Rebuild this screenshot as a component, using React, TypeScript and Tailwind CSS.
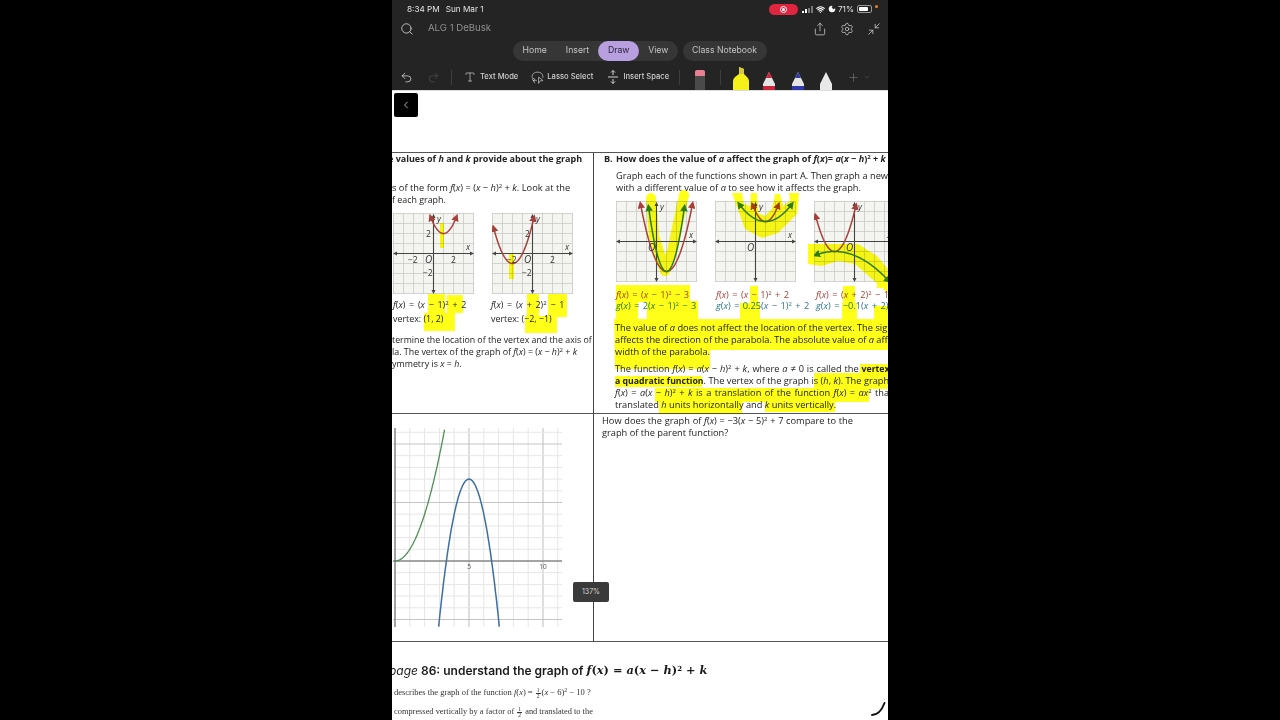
import { ChevronDown, ChevronLeft, Plus, Redo2, Search, Settings, Share, Type, Undo2, Minimize2, Moon, Wifi, LassoSelect } from 'lucide-react';

type Curve = { a: number; h: number; k: number; color: string };

const RED = '#a8403a';
const GREEN = '#2e7d3c';

// samples y = a(x-h)^2 + k, skipping what leaves the little grid
function parabolaPath(c: Curve, unit: number, ox: number, oy: number, xMin: number, xMax: number, yMin: number, yMax: number) {
  const pts: string[] = [];
  for (let x = xMin; x <= xMax; x += 0.05) {
    const y = c.a * (x - c.h) * (x - c.h) + c.k;
    if (y > yMax || y < yMin) continue;
    pts.push(`${(ox + x * unit).toFixed(1)},${(oy - y * unit).toFixed(1)}`);
  }
  return 'M' + pts.join(' L');
}

function MiniGraph({ curves, labels, className }: { curves: Curve[]; labels?: boolean; className?: string }) {
  const lines = [0.5, 10.5, 20.5, 30.5, 40.5, 50.5, 60.5, 70.5, 80.5];
  return (
    <svg width="81" height="81" viewBox="0 0 81 81" className={className}>
      <defs>
        <marker id="tip-red" markerWidth="5" markerHeight="5" refX="3" refY="2.5" orient="auto-start-reverse">
          <path d="M0 0 L5 2.5 L0 5z" fill={RED} />
        </marker>
        <marker id="tip-green" markerWidth="5" markerHeight="5" refX="3" refY="2.5" orient="auto-start-reverse">
          <path d="M0 0 L5 2.5 L0 5z" fill={GREEN} />
        </marker>
      </defs>
      <rect width="81" height="81" fill="#f4f4f1" />
      {lines.map((p) => (
        <g key={p} stroke="#c9c9c5" strokeWidth="0.8">
          <line x1={p} y1="0" x2={p} y2="81" />
          <line x1="0" y1={p} x2="81" y2={p} />
        </g>
      ))}
      <g stroke="#444" strokeWidth="1.1" fill="#444">
        <line x1="2" y1="40.5" x2="79" y2="40.5" />
        <line x1="40.5" y1="3" x2="40.5" y2="78" />
        <path d="M0 40.5 L4 38.5 L4 42.5z M81 40.5 L77 38.5 L77 42.5z M40.5 1 L38.5 5 L42.5 5z M40.5 81 L38.5 77 L42.5 77z" stroke="none" />
      </g>
      {curves.map((c, i) => (
        <path
          key={i}
          d={parabolaPath(c, 10, 40.5, 40.5, -3.9, 4.8, -4, 3.8)}
          fill="none"
          stroke={c.color}
          strokeWidth="1.5"
          markerStart={c.color === RED ? 'url(#tip-red)' : 'url(#tip-green)'}
          markerEnd={c.color === RED ? 'url(#tip-red)' : 'url(#tip-green)'}
        />
      ))}
      <g fontFamily="'Open Sans', sans-serif" fontSize="8.5" fill="#333">
        <text x="44" y="9" fontStyle="italic">y</text>
        <text x="73" y="37" fontStyle="italic">x</text>
        <text x="32" y="50" fontStyle="italic" fontSize="10">O</text>
        {labels && (
          <>
            <text x="33" y="24">2</text>
            <text x="58" y="50">2</text>
            <text x="15" y="50">−2</text>
            <text x="30" y="63">−2</text>
          </>
        )}
      </g>
    </svg>
  );
}

function PracticeGraph() {
  const ox = 2;
  const oy = 133;
  const ux = 14.8;
  const uy = 11.7;
  const vs = Array.from({ length: 12 }, (_, i) => i);
  const hs = Array.from({ length: 18 }, (_, i) => i - 6);
  const curve = (f: (x: number) => number, from: number, to: number) => {
    const pts: string[] = [];
    for (let x = from; x <= to; x += 0.05) pts.push(`${(ox + x * ux).toFixed(1)},${(oy - f(x) * uy).toFixed(1)}`);
    return 'M' + pts.join(' L');
  };
  return (
    <svg width="170" height="200" viewBox="0 0 170 200" className="ml-px mt-[14px]">
      {vs.map((i) => (
        <line key={i} x1={ox + i * ux} y1="0" x2={ox + i * ux} y2="199" stroke={i % 5 === 0 ? '#bdbdbd' : '#e6e6e6'} />
      ))}
      {hs.map((i) => (
        <line key={i} x1="0" y1={oy - i * uy} x2="169" y2={oy - i * uy} stroke={i % 5 === 0 ? '#c4c4c4' : '#e6e6e6'} />
      ))}
      <line x1={ox} y1="0" x2={ox} y2="199" stroke="#666" />
      <line x1="0" y1={oy} x2="169" y2={oy} stroke="#666" />
      <path d={curve((x) => x * x, 0, 3.39)} fill="none" stroke="#4f8f55" strokeWidth="1.3" />
      <path d={curve((x) => -3 * (x - 5) * (x - 5) + 7, 2.95, 7.05)} fill="none" stroke="#3f6f9f" strokeWidth="1.5" />
      <g fontFamily="'Open Sans', sans-serif" fontSize="6.5" fill="#555" textAnchor="middle">
        <text x={ox + 5 * ux} y={oy + 8}>5</text>
        <text x={ox + 10 * ux} y={oy + 8}>10</text>
      </g>
    </svg>
  );
}

function Highlights() {
  return (
    <svg width="496" height="630" viewBox="392 90 496 630" className="absolute inset-0 mix-blend-multiply pointer-events-none">
      <g fill="#ffff1a" stroke="none">
        <rect x="440" y="222" width="4" height="25" />
        <rect x="509" y="253" width="5" height="25" />
        <rect x="428" y="293" width="17" height="30" />
        <rect x="447" y="294" width="16" height="18" />
        <rect x="424" y="312" width="31" height="18" />
        <rect x="527" y="293" width="12" height="39" />
        <rect x="548" y="293" width="19" height="23" />
        <rect x="525" y="315" width="32" height="17" />

        <path d="M616 284 H690 V300 H698 V318 H647 V301 H638 V318 H616z" />
        <path d="M740 302 H760 V318 H740z M750 285 H758 V302 H750z" />
        <path d="M842 302 H857 V318 H842z M843 285 H855 V302 H843z M877 280 H888 V287 H877z M874 305 H888 V318 H874z" />
        <path d="M614 318 H888 V349 H710 V368 H615z" />
        <rect x="860" y="363" width="28" height="11" />
        <rect x="814" y="372" width="74" height="16" />
        <rect x="615" y="375" width="87" height="11" />
        <rect x="655" y="387" width="214" height="14" />
        <rect x="659" y="400" width="83" height="13" />
        <rect x="765" y="400" width="70" height="11" />

        <path d="M732 192 L742 192 L744 203 L750 205 L751 192 L757 192 L758 212 L765 215 L772 208 L775 193 L780 193 L783 205 L790 200 L789 192 L799 192 L797 213 L778 232 L762 237 L745 228z" />
        <path d="M808 243 L858 243 L877 255 L888 268 V292 L880 285 L855 263 L838 260 L822 265 L808 263z" />
      </g>
      <path d="M651 197 L654 235 L665 270 L672 250 L678 222 L684 194" fill="none" stroke="#ffff1a" strokeWidth="10" strokeLinecap="round" strokeLinejoin="round" />
    </svg>
  );
}

function TopBar() {
  return (
    <div className="h-[90px] shrink-0 bg-[#242424] text-[#c4c4c4] font-['Inter',sans-serif] flex flex-col">
      <div className="h-[19px] flex items-center pl-[15px] pr-[10px] text-[8.2px] text-[#e2e2e2]">
        <span>8:34 PM</span>
        <span className="ml-[6px]">Sun Mar 1</span>
        <div className="ml-auto flex items-center">
          <div className="w-[29px] h-[11px] rounded-full bg-[#e0263f] flex items-center justify-center">
            <div className="w-[7px] h-[7px] rounded-full border border-white flex items-center justify-center">
              <div className="w-[3px] h-[3px] rounded-full bg-white" />
            </div>
          </div>
          <div className="ml-[4px] flex items-end gap-px h-[7px]">
            <div className="w-[2px] h-[2px] bg-white" />
            <div className="w-[2px] h-[4px] bg-white" />
            <div className="w-[2px] h-[5px] bg-[#777]" />
            <div className="w-[2px] h-[7px] bg-[#777]" />
          </div>
          <Wifi size={9} strokeWidth={3} className="ml-[3px] text-white" />
          <Moon size={8} fill="white" className="ml-[3px] text-white" />
          <span className="ml-[2px]">71%</span>
          <div className="ml-[3px] w-[15px] h-[8px] rounded-[2px] border border-[#999] p-px">
            <div className="w-[9px] h-full bg-white rounded-[1px]" />
          </div>
          <div className="ml-[3px] mb-[5px] w-[3px] h-[3px] rounded-full bg-[#e8862a]" />
        </div>
      </div>
      <div className="h-[19px] flex items-center pl-[8px] pr-[7px]">
        <Search size={14} strokeWidth={1.5} className="text-[#d0d0d0]" />
        <span className="ml-[14px] text-[9.6px] text-[#8f8f8f]">ALG 1 DeBusk</span>
        <Share size={14} strokeWidth={1.4} className="ml-auto" />
        <Settings size={14} strokeWidth={1.4} className="ml-[13px]" />
        <Minimize2 size={14} strokeWidth={1.4} className="ml-[13px]" />
      </div>
      <div className="mt-[3px] h-[20px] flex justify-center gap-[5px] text-[8.7px] pr-[1px]">
        <div className="flex items-center rounded-full bg-[#363636] w-[165px]">
          <span className="ml-[10px]">Home</span>
          <span className="ml-[19px]">Insert</span>
          <span className="ml-[9px] w-[41px] h-[20px] rounded-full bg-[#b79fe0] text-[#2a2438] flex items-center justify-center">Draw</span>
          <span className="ml-[9px]">View</span>
        </div>
        <div className="flex items-center justify-center rounded-full bg-[#363636] w-[84px]">Class Notebook</div>
      </div>
      <div className="flex-1 flex items-center pl-[8px] pt-[3px] text-[7.6px] font-medium text-[#cfcfcf] relative">
        <Undo2 size={13} strokeWidth={1.5} />
        <Redo2 size={13} strokeWidth={1.5} className="ml-[14px] text-[#4a4a4a]" />
        <div className="ml-[11px] w-px h-[15px] bg-[#3d3d3d]" />
        <Type size={12} strokeWidth={1.4} className="ml-[12px]" />
        <span className="ml-[4px]">Text Mode</span>
        <LassoSelect size={13} strokeWidth={1.3} className="ml-[13px]" />
        <span className="ml-[3px]">Lasso Select</span>
        <svg width="10" height="14" viewBox="0 0 10 14" className="ml-[15px]" fill="none" stroke="#cfcfcf" strokeWidth="1">
          <path d="M5 0.5 V5 M3 2.5 L5 0.5 L7 2.5 M0 7 H10 M5 13.5 V9 M3 11.5 L5 13.5 L7 11.5" />
        </svg>
        <span className="ml-[5px]">Insert Space</span>
        <div className="ml-[10px] w-px h-[15px] bg-[#3d3d3d]" />
        <svg width="12" height="20" viewBox="0 0 12 20" className="ml-[14px] self-end">
          <rect x="1" y="0" width="10" height="7" rx="2" fill="#e87f93" />
          <rect x="1" y="6" width="10" height="14" fill="#4a4a4a" />
        </svg>
        <div className="ml-[14px] w-px h-[15px] bg-[#3d3d3d]" />
        <svg width="16" height="23" viewBox="0 0 16 23" className="ml-[12px] self-end">
          <path d="M6 0 L11 2 V7 L14 10 Q16 12 16 14 V23 H0 V14 Q0 12 2 10 L6 7z" fill="#f5f01a" />
          <path d="M6 0 L11 2 V7 H6z" fill="#d9c93a" />
        </svg>
        <svg width="12" height="18" viewBox="0 0 12 18" className="ml-[14px] self-end">
          <path d="M6 0 L9 6 L12 12 V18 H0 V12 L3 6z" fill="#e5e5e5" />
          <path d="M6 0 L9 6 H3z" fill="#c9263a" />
          <rect y="14" width="12" height="4" fill="#c9263a" />
        </svg>
        <svg width="12" height="18" viewBox="0 0 12 18" className="ml-[17px] self-end">
          <path d="M6 0 L9 6 L12 12 V18 H0 V12 L3 6z" fill="#e5e5e5" />
          <path d="M6 0 L9 6 H3z" fill="#2f3aa8" />
          <rect y="14" width="12" height="4" fill="#2f3aa8" />
        </svg>
        <svg width="12" height="18" viewBox="0 0 12 18" className="ml-[16px] self-end">
          <path d="M6 0 L9 6 L12 12 V18 H0 V12 L3 6z" fill="#e8e8e8" />
        </svg>
        <Plus size={13} strokeWidth={1.2} className="ml-[15px] text-[#777]" />
        <ChevronDown size={8} className="ml-[3px] text-[#555]" />
      </div>
    </div>
  );
}

function Half() {
  return (
    <span className="inline-flex flex-col items-center align-middle text-[5.5px] leading-[5px] mx-px">
      <span className="border-b border-[#333] px-px">1</span>
      <span>2</span>
    </span>
  );
}

function Worksheet() {
  return (
    <div className="relative flex-1 bg-white overflow-hidden border-t border-[#ddd] text-[#222]">
      <div className="ml-[2px] mt-[2px] w-[24px] h-[24px] bg-black rounded-[2px] flex items-center justify-center">
        <ChevronLeft size={12} className="text-[#aaa]" />
      </div>

      <div className="mt-[35px] border-y border-[#555] grid grid-cols-[201px_1px_294px] grid-rows-[260px_228px] font-['Open_Sans',sans-serif] text-[9.25px] leading-[12px] whitespace-nowrap">
        <div className="overflow-hidden text-[8.9px]">
          <div className="font-bold h-[12px] text-[9px] -ml-[4px]">
            e values of <i>h</i> and <i>k</i> provide about the graph
          </div>
          <div className="mt-[17px] text-[9.3px]">
            s of the form <i>f</i>(<i>x</i>) = (<i>x</i> − <i>h</i>)<sup className="text-[6px]">2</sup> + <i>k</i>. Look at the
          </div>
          <div>f each graph.</div>
          <div className="mt-[7px] flex pl-[1px] gap-[18px]">
            <MiniGraph labels curves={[{ a: 1, h: 1, k: 2, color: RED }]} />
            <MiniGraph labels curves={[{ a: 1, h: -2, k: -1, color: RED }]} />
          </div>
          <div className="mt-[5px] flex [word-spacing:1.5px]">
            <div className="w-[99px] shrink-0 pl-[1px]">
              <i>f</i>(<i>x</i>) = (<i>x</i> − 1)<sup className="text-[6px]">2</sup> + 2
            </div>
            <div>
              <i>f</i>(<i>x</i>) = (<i>x</i> + 2)<sup className="text-[6px]">2</sup> − 1
            </div>
          </div>
          <div className="mt-[2px] flex">
            <div className="w-[99px] shrink-0 pl-[1px]">vertex: (1, 2)</div>
            <div>vertex: (−2, −1)</div>
          </div>
          <div className="mt-[9px] text-[8.8px]">termine the location of the vertex and the axis of</div>
          <div>
            la. The vertex of the graph of <i>f</i>(<i>x</i>) = (<i>x</i> − <i>h</i>)<sup className="text-[6px]">2</sup> + <i>k</i>
          </div>
          <div>
            ymmetry is <i>x</i> = <i>h</i>.
          </div>
        </div>

        <div className="row-span-2 bg-[#444]" />

        <div className="overflow-hidden">
          <div className="font-bold h-[12px] pl-[10px] flex text-[9.1px]">
            <span className="w-[12px] shrink-0">B.</span>
            <span>
              How does the value of <i>a</i> affect the graph of <i>f</i>(<i>x</i>)= <i>a</i>(<i>x</i> − <i>h</i>)<sup className="text-[6px]">2</sup> + <i>k</i>
            </span>
          </div>
          <div className="mt-[5px] pl-[22px]">Graph each of the functions shown in part A. Then graph a new</div>
          <div className="pl-[22px]">
            with a different value of <i>a</i> to see how it affects the graph.
          </div>
          <div className="mt-[7px] pl-[22px] flex gap-[18px]">
            <MiniGraph className="shrink-0" curves={[{ a: 1, h: 1, k: -3, color: RED }, { a: 2, h: 1, k: -3, color: GREEN }]} />
            <MiniGraph className="shrink-0" curves={[{ a: 1, h: 1, k: 2, color: RED }, { a: 0.25, h: 1, k: 2, color: GREEN }]} />
            <MiniGraph className="shrink-0" curves={[{ a: 1, h: -2, k: -1, color: RED }, { a: -0.1, h: -2, k: -1, color: GREEN }]} />
          </div>
          <div className="mt-[7px] pl-[22px] flex text-[#a8403a] [word-spacing:1px]">
            <div className="w-[100px] shrink-0"><i>f</i>(<i>x</i>) = (<i>x</i> − 1)<sup className="text-[6px]">2</sup> − 3</div>
            <div className="w-[100px] shrink-0"><i>f</i>(<i>x</i>) = (<i>x</i> − 1)<sup className="text-[6px]">2</sup> + 2</div>
            <div><i>f</i>(<i>x</i>) = (<i>x</i> + 2)<sup className="text-[6px]">2</sup> − 1</div>
          </div>
          <div className="-mt-px pl-[22px] flex text-[#2b7a8b] [word-spacing:1px]">
            <div className="w-[100px] shrink-0"><i>g</i>(<i>x</i>) = 2(<i>x</i> − 1)<sup className="text-[6px]">2</sup> − 3</div>
            <div className="w-[100px] shrink-0"><i>g</i>(<i>x</i>) = 0.25(<i>x</i> − 1)<sup className="text-[6px]">2</sup> + 2</div>
            <div><i>g</i>(<i>x</i>) = −0.1(<i>x</i> + 2)<sup className="text-[6px]">2</sup> − 1</div>
          </div>
          <div className="mt-[10px] pl-[21px]">
            The value of <i>a</i> does not affect the location of the vertex. The sign of <i>a</i>
          </div>
          <div className="pl-[21px]">
            affects the direction of the parabola. The absolute value of <i>a</i> affects the
          </div>
          <div className="pl-[21px]">width of the parabola.</div>
          <div className="mt-[5px] pl-[21px] [word-spacing:0.5px]">
            The function <i>f</i>(<i>x</i>) = <i>a</i>(<i>x</i> − <i>h</i>)<sup className="text-[6px]">2</sup> + <i>k</i>, where <i>a</i> ≠ 0 is called the <b className="text-[8.7px]">vertex form of</b>
          </div>
          <div className="pl-[21px]">
            <b className="text-[8.7px]">a quadratic function</b>. The vertex of the graph is (<i>h</i>, <i>k</i>). The graph of
          </div>
          <div className="pl-[21px] [word-spacing:1px]">
            <i>f</i>(<i>x</i>) = <i>a</i>(<i>x</i> − <i>h</i>)<sup className="text-[6px]">2</sup> + <i>k</i> is a translation of the function <i>f</i>(<i>x</i>) = <i>ax</i><sup className="text-[6px]">2</sup> that is
          </div>
          <div className="pl-[21px]">
            translated <i>h</i> units horizontally and <i>k</i> units vertically.
          </div>
        </div>

        <div className="col-start-1 row-start-2 border-t border-[#555] overflow-hidden">
          <PracticeGraph />
        </div>

        <div className="col-start-3 row-start-2 border-t border-[#555] pl-[8px] pt-px overflow-hidden">
          <div className="[word-spacing:0.3px]">
            How does the graph of <i>f</i>(<i>x</i>) = −3(<i>x</i> − 5)<sup className="text-[6px]">2</sup> + 7 compare to the
          </div>
          <div>graph of the parent function?</div>
        </div>
      </div>

      <div className="mt-[20px] whitespace-nowrap">
        <div className="h-[18px] flex items-center text-[12px] text-[#1a1a1a] font-['Inter',sans-serif] font-semibold -ml-[3px]">
          <i className="font-normal">page</i>
          <span className="ml-[3px]">86: understand the graph of</span>
          <span className="ml-[3px] font-['DejaVu_Serif',serif] font-bold text-[11.4px]">
            <i>f</i>(<i>x</i>) = <i>a</i>(<i>x</i> − <i>h</i>)<sup className="text-[7px]">2</sup> + <i>k</i>
          </span>
        </div>
        <div className="mt-[6px] pl-[2px] h-[12px] font-['Liberation_Serif',serif] text-[8.5px] leading-[12px] text-[#333]">
          describes the graph of the function <i>f</i>(<i>x</i>) = <Half />(<i>x</i> − 6)<sup className="text-[6px]">2</sup> − 10 ?
        </div>
        <div className="mt-[8px] pl-[2px] h-[12px] font-['Liberation_Serif',serif] text-[8.4px] leading-[12px] text-[#333]">
          compressed vertically by a factor of <Half /> and translated to the
        </div>
      </div>

      <Highlights />

      <div className="absolute left-[181px] top-[491px] w-[36px] h-[20px] rounded-[2px] bg-[#3a3a3a] text-[#d8d8d8] text-[7px] font-['Inter',sans-serif] flex items-center justify-center">
        137%
      </div>
      <svg width="16" height="16" viewBox="0 0 16 16" className="absolute right-[2px] bottom-[2px]">
        <path d="M2 13 Q10 13 14.5 1" fill="none" stroke="#111" strokeWidth="1.9" strokeLinecap="round" />
      </svg>
    </div>
  );
}

export default function App() {
  return (
    <div className="h-[720px] bg-black flex justify-center overflow-hidden">
      <div className="w-[496px] flex flex-col overflow-hidden blur-[0.3px]">
        <TopBar />
        <Worksheet />
      </div>
    </div>
  );
}
